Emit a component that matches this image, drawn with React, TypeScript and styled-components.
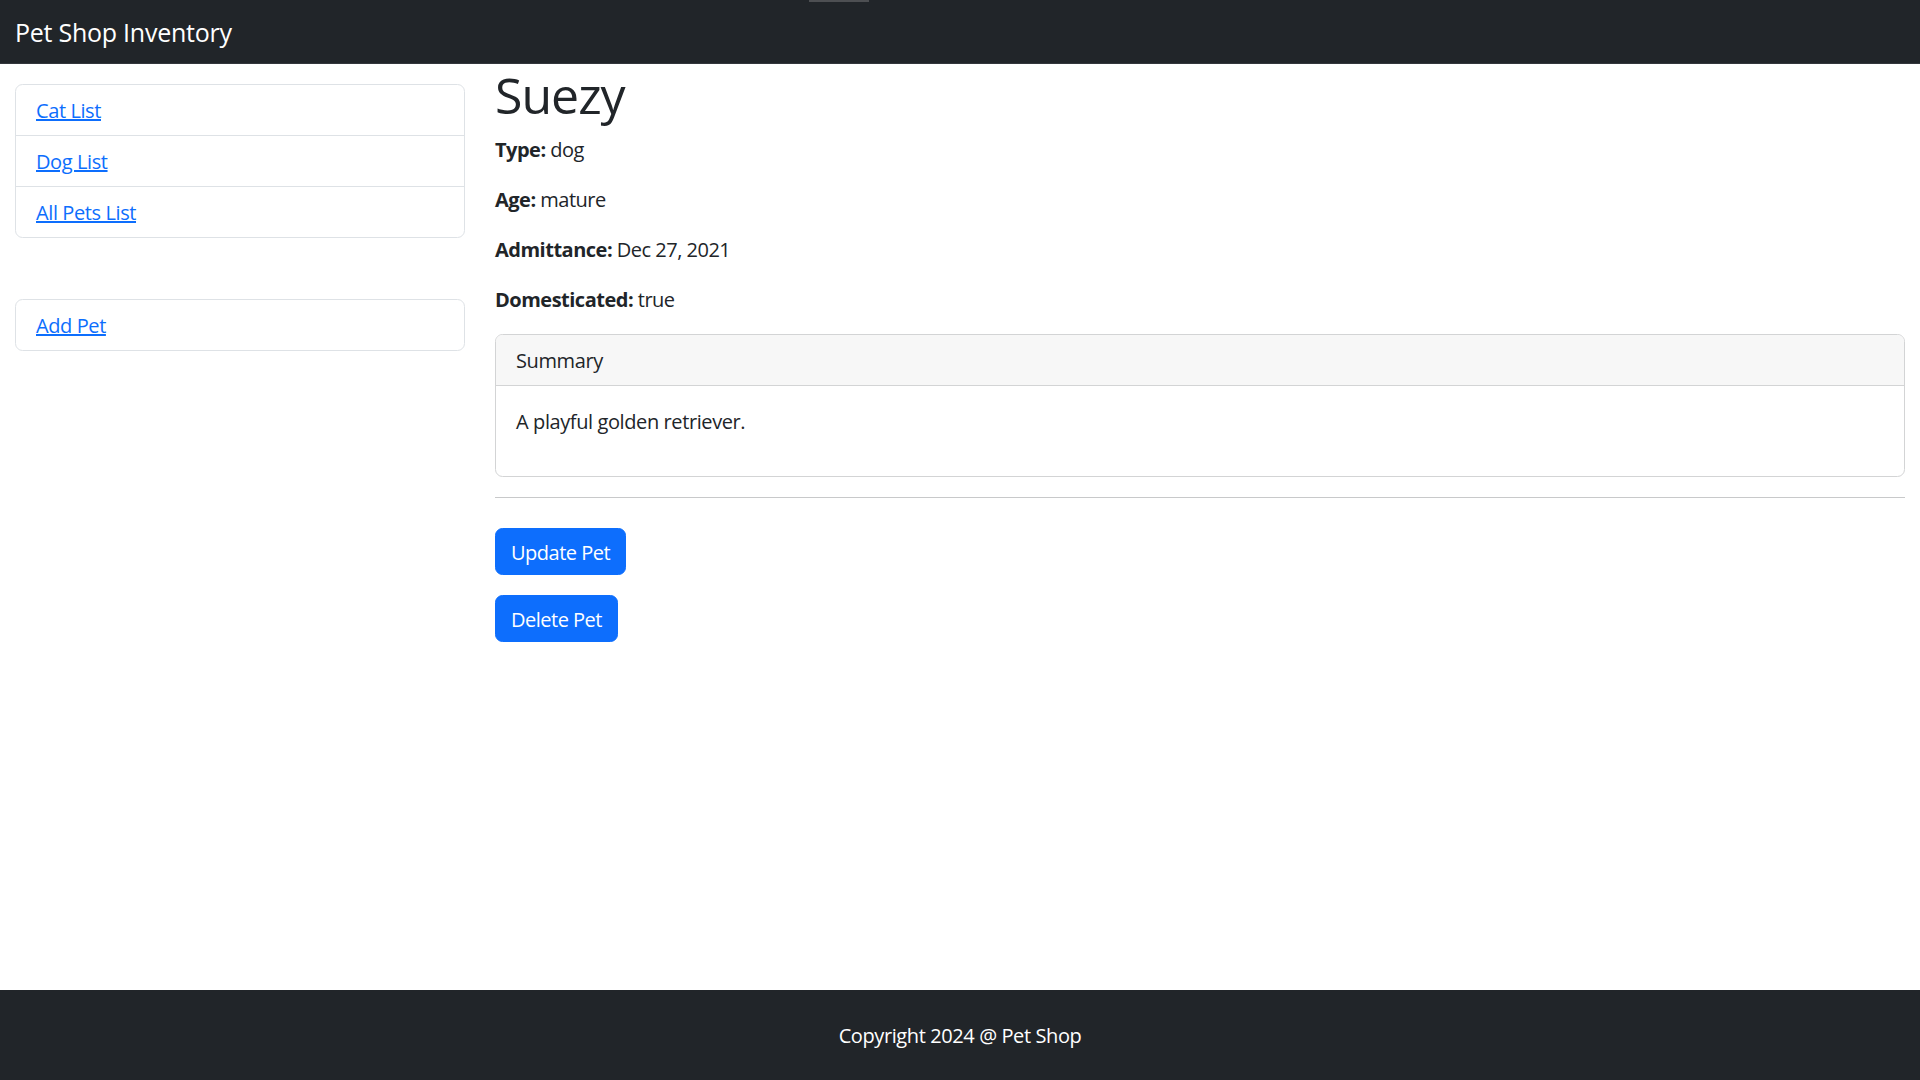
import React from "react";
import styled, { createGlobalStyle } from "styled-components";

const GlobalStyle = createGlobalStyle`
  html, body { margin: 0; padding: 0; }
  body {
    font-family: "Open Sans", "Noto Sans", "Liberation Sans", sans-serif;
    font-size: 20px;
    line-height: 1.5;
    color: #212529;
    background: #ffffff;
  }
  *, *::before, *::after { box-sizing: border-box; }
`;

const Page = styled.div`
  position: relative;
  min-height: 100vh;
  display: flex;
  flex-direction: column;
`;

const TopMark = styled.div`
  position: absolute;
  top: 0;
  left: 809px;
  width: 60px;
  height: 2px;
  background: #4d4f52;
`;

const NavBar = styled.header`
  height: 64px;
  background: #212529;
  display: flex;
  align-items: center;
  padding: 2px 15px 0;
  border-bottom: 1px solid #33373c;
`;

const Brand = styled.span`
  color: #ffffff;
  font-size: 25px;
  line-height: 37.5px;
  letter-spacing: -0.25px;
`;

const Main = styled.main`
  flex: 1;
  display: grid;
  grid-template-columns: 450px 1fr;
  column-gap: 30px;
  padding: 0 15px;
  align-items: start;
`;

const Sidebar = styled.aside`
  display: flex;
  flex-direction: column;
  gap: 61px;
  padding-top: 20px;
`;

const ListGroup = styled.ul`
  list-style: none;
  margin: 0;
  padding: 0;
  border: 1px solid #dee2e6;
  border-radius: 7.5px;
  overflow: hidden;
`;

const ListItem = styled.li`
  padding: 11px 20px 9px;
  line-height: 30px;
  & + & { border-top: 1px solid #dee2e6; }
`;

const NavLink = styled.a`
  color: #0d6efd;
  text-decoration: underline;
  letter-spacing: -0.4px;
`;

const Content = styled.section`
  display: flex;
  flex-direction: column;
`;

const Title = styled.h1`
  margin: 0 0 10px;
  padding-top: 1px;
  font-size: 50px;
  line-height: 60px;
  font-weight: 500;
  letter-spacing: -1px;
`;

const Detail = styled.p`
  margin: 0 0 20px;
  line-height: 30px;
  letter-spacing: -0.5px;
`;

const Label = styled.strong`
  font-weight: 700;
`;

const Card = styled.div`
  margin-top: -1px;
  border: 1px solid #d3d4d5;
  border-radius: 7.5px;
  overflow: hidden;
`;

const CardHeader = styled.div`
  background: #f7f7f7;
  padding: 11px 20px 9px;
  line-height: 30px;
  border-bottom: 1px solid #d3d4d5;
  letter-spacing: -0.4px;
`;

const CardBody = styled.div`
  padding: 21px 20px 19px;
  & p { margin: 0 0 20px; line-height: 30px; letter-spacing: -0.4px; }
`;

const Rule = styled.hr`
  margin: 20px 0 30px;
  border: 0;
  border-top: 1px solid #c8c9ca;
`;

const Actions = styled.div`
  display: flex;
  flex-direction: column;
  align-items: flex-start;
  gap: 20px;
`;

const Button = styled.button`
  font-family: inherit;
  font-size: 20px;
  line-height: 30px;
  color: #ffffff;
  background: #0d6efd;
  border: 1px solid #0d6efd;
  border-radius: 7.5px;
  padding: 8.5px 15px 6.5px;
  cursor: pointer;
  letter-spacing: -0.5px;
`;

const Footer = styled.footer`
  height: 90px;
  background: #212529;
  color: #ffffff;
  display: flex;
  align-items: center;
  justify-content: center;
  padding-top: 2px;
  line-height: 30px;
  letter-spacing: -0.4px;
`;

export default function App() {
  return (
    <>
      <GlobalStyle />
      <Page>
        <TopMark />
        <NavBar>
          <Brand>Pet Shop Inventory</Brand>
        </NavBar>
        <Main>
          <Sidebar>
            <ListGroup>
              <ListItem><NavLink href="#">Cat List</NavLink></ListItem>
              <ListItem><NavLink href="#">Dog List</NavLink></ListItem>
              <ListItem><NavLink href="#">All Pets List</NavLink></ListItem>
            </ListGroup>
            <ListGroup>
              <ListItem><NavLink href="#">Add Pet</NavLink></ListItem>
            </ListGroup>
          </Sidebar>
          <Content>
            <Title>Suezy</Title>
            <Detail><Label>Type:</Label> dog</Detail>
            <Detail><Label>Age:</Label> mature</Detail>
            <Detail><Label>Admittance:</Label> Dec 27, 2021</Detail>
            <Detail><Label>Domesticated:</Label> true</Detail>
            <Card>
              <CardHeader>Summary</CardHeader>
              <CardBody>
                <p>A playful golden retriever.</p>
              </CardBody>
            </Card>
            <Rule />
            <Actions>
              <Button>Update Pet</Button>
              <Button>Delete Pet</Button>
            </Actions>
          </Content>
        </Main>
        <Footer>Copyright 2024 @ Pet Shop</Footer>
      </Page>
    </>
  );
}
